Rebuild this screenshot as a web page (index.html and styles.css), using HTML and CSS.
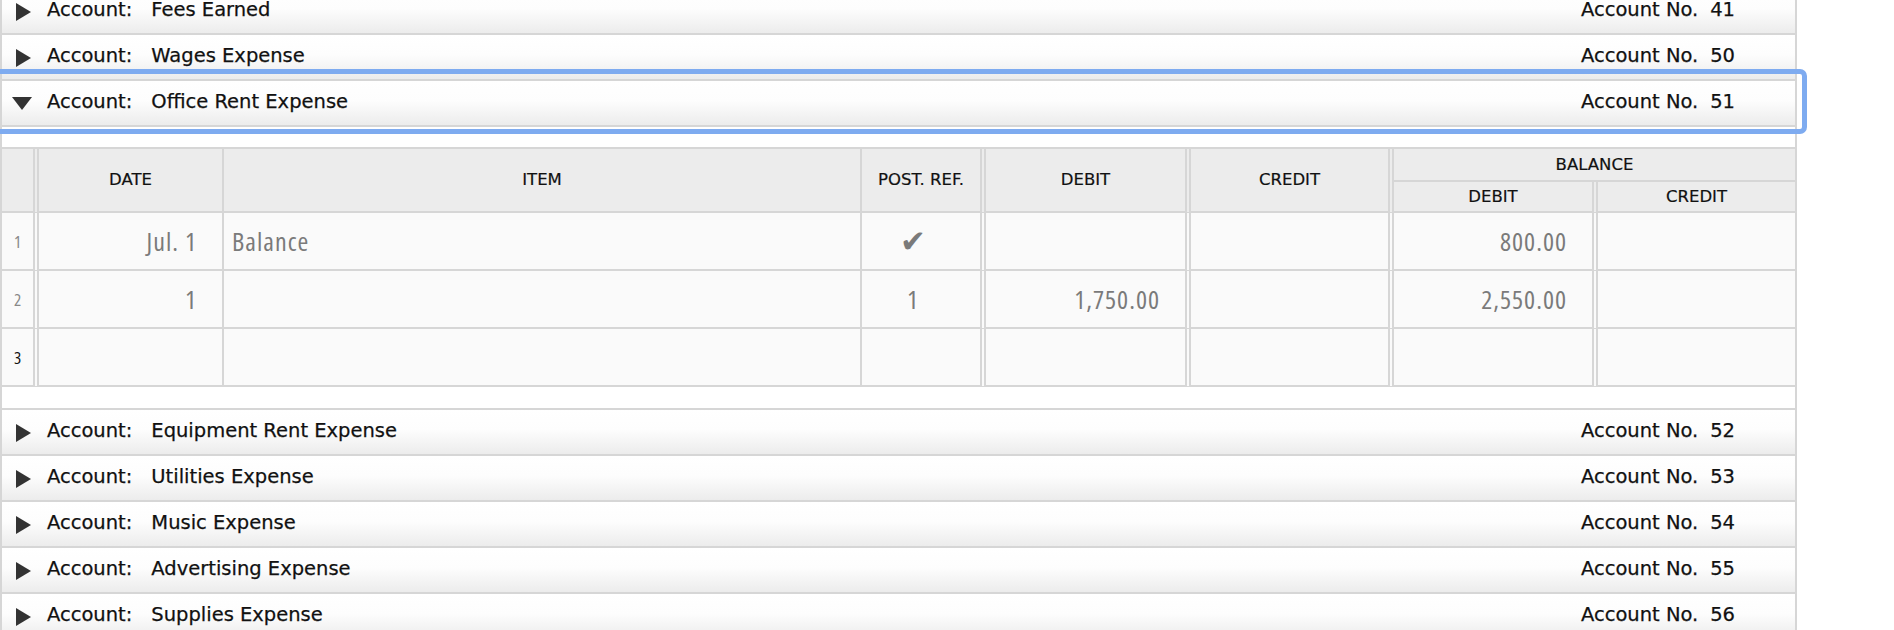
FILE: index.html
```html
<!DOCTYPE html>
<html lang="en">
<head>
<meta charset="utf-8">
<title>General Ledger</title>
<link rel="stylesheet" href="styles.css">
</head>
<body>
<div class="panel">
  <div class="acct-head">
    <span class="tw"><svg class="tri-r" viewBox="0 0 15 18" width="15" height="18"><polygon points="0,0 15,9 0,18"/></svg></span>
    <span class="lbl">Account:</span><span class="name">Fees Earned</span>
    <span class="no">Account No.<span class="num">41</span></span>
  </div>
  <div class="acct-head">
    <span class="tw"><svg class="tri-r" viewBox="0 0 15 18" width="15" height="18"><polygon points="0,0 15,9 0,18"/></svg></span>
    <span class="lbl">Account:</span><span class="name">Wages Expense</span>
    <span class="no">Account No.<span class="num">50</span></span>
  </div>
  <div class="acct-head focused">
    <span class="tw"><svg class="tri-d" viewBox="0 0 20 13" width="20" height="13"><polygon points="0,0 20,0 10,13"/></svg></span>
    <span class="lbl">Account:</span><span class="name">Office Rent Expense</span>
    <span class="no">Account No.<span class="num">51</span></span>
  </div>
  <div class="acct-body">
    <div class="ledger">
      <div class="c h c-rn hs"></div>
      <div class="c h c-date hs">DATE</div>
      <div class="c h c-item hs">ITEM</div>
      <div class="c h c-pr hs">POST. REF.</div>
      <div class="c h c-dr hs">DEBIT</div>
      <div class="c h c-cr hs">CREDIT</div>
      <div class="c h c-bal">BALANCE</div>
      <div class="c h c-bdr">DEBIT</div>
      <div class="c h c-bcr">CREDIT</div>

      <div class="c d c-rn rn">1</div>
      <div class="c d c-date num-r">Jul. 1</div>
      <div class="c d c-item txt">Balance</div>
      <div class="c d c-pr ctr"><span class="check">&#10004;</span></div>
      <div class="c d c-dr num-r"></div>
      <div class="c d c-cr num-r"></div>
      <div class="c d c-bdr num-r">800.00</div>
      <div class="c d c-bcr num-r"></div>

      <div class="c d c-rn rn">2</div>
      <div class="c d c-date num-r">1</div>
      <div class="c d c-item txt"></div>
      <div class="c d c-pr ctr">1</div>
      <div class="c d c-dr num-r">1,750.00</div>
      <div class="c d c-cr num-r"></div>
      <div class="c d c-bdr num-r">2,550.00</div>
      <div class="c d c-bcr num-r"></div>

      <div class="c d c-rn rn rn-new">3</div>
      <div class="c d c-date num-r"></div>
      <div class="c d c-item txt"></div>
      <div class="c d c-pr ctr"></div>
      <div class="c d c-dr num-r"></div>
      <div class="c d c-cr num-r"></div>
      <div class="c d c-bdr num-r"></div>
      <div class="c d c-bcr num-r"></div>
    </div>
  </div>
  <div class="acct-head">
    <span class="tw"><svg class="tri-r" viewBox="0 0 15 18" width="15" height="18"><polygon points="0,0 15,9 0,18"/></svg></span>
    <span class="lbl">Account:</span><span class="name">Equipment Rent Expense</span>
    <span class="no">Account No.<span class="num">52</span></span>
  </div>
  <div class="acct-head">
    <span class="tw"><svg class="tri-r" viewBox="0 0 15 18" width="15" height="18"><polygon points="0,0 15,9 0,18"/></svg></span>
    <span class="lbl">Account:</span><span class="name">Utilities Expense</span>
    <span class="no">Account No.<span class="num">53</span></span>
  </div>
  <div class="acct-head">
    <span class="tw"><svg class="tri-r" viewBox="0 0 15 18" width="15" height="18"><polygon points="0,0 15,9 0,18"/></svg></span>
    <span class="lbl">Account:</span><span class="name">Music Expense</span>
    <span class="no">Account No.<span class="num">54</span></span>
  </div>
  <div class="acct-head">
    <span class="tw"><svg class="tri-r" viewBox="0 0 15 18" width="15" height="18"><polygon points="0,0 15,9 0,18"/></svg></span>
    <span class="lbl">Account:</span><span class="name">Advertising Expense</span>
    <span class="no">Account No.<span class="num">55</span></span>
  </div>
  <div class="acct-head">
    <span class="tw"><svg class="tri-r" viewBox="0 0 15 18" width="15" height="18"><polygon points="0,0 15,9 0,18"/></svg></span>
    <span class="lbl">Account:</span><span class="name">Supplies Expense</span>
    <span class="no">Account No.<span class="num">56</span></span>
  </div>
</div>
</body>
</html>
```
FILE: styles.css
```css
html, body {
  margin: 0;
  padding: 0;
  background: #ffffff;
}

body {
  font-family: "DejaVu Sans", Verdana, sans-serif;
  color: #111111;
  overflow: hidden;
}

.panel {
  width: 1797px;
  box-sizing: border-box;
  border-left: 2px solid #d6d6d6;
  border-right: 2px solid #d6d6d6;
  margin-top: -13px;
}

.acct-head {
  position: relative;
  display: flex;
  align-items: center;
  height: 44px;
  border-top: 2px solid #d6d6d6;
  background: linear-gradient(#ffffff 0%, #fdfdfd 45%, #ececec 100%);
  padding-left: 10px;
  padding-right: 60px;
  font-size: 19.5px;
  line-height: 1;
  -webkit-text-stroke: 0.25px #111111;
}

.acct-head.focused::after {
  content: "";
  position: absolute;
  top: -12px;
  bottom: -9px;
  left: -20px;
  right: -12px;
  border: 5px solid #7eabf0;
  border-radius: 7px;
  pointer-events: none;
}

.tw {
  width: 20px;
  height: 20px;
  display: flex;
  align-items: center;
  justify-content: center;
  margin-top: 1px;
}

.tw svg {
  fill: #333333;
  display: block;
}

.tri-r {
  margin-left: 2px;
}

.lbl {
  margin-left: 15px;
  margin-top: -2px;
}

.name {
  margin-left: 19px;
  margin-top: -2px;
}

.no {
  margin-left: auto;
  margin-top: -2px;
  width: 154px;
  display: flex;
  justify-content: space-between;
  white-space: nowrap;
}

.acct-body {
  border-top: 2px solid #d6d6d6;
  padding: 20px 0 21px;
  background: #ffffff;
}

.ledger {
  display: grid;
  grid-template-columns: 37px 185px 638px 124px 205px 203px 204px 197px;
  grid-template-rows: 33px 31px repeat(3, 58px);
  border-top: 2px solid #d6d6d6;
}

.c {
  box-sizing: border-box;
  border-bottom: 2px solid #d6d6d6;
  display: flex;
  align-items: center;
}

.c-rn, .c-pr, .c-dr, .c-cr, .c-bdr {
  border-right: 6px double #d6d6d6;
}

.c-date, .c-item {
  border-right: 2px solid #d6d6d6;
}

.h {
  background: #ececec;
  justify-content: center;
  font-size: 16.5px;
  color: #111111;
  line-height: 1;
  -webkit-text-stroke: 0.2px #111111;
}

.hs {
  grid-row: span 2;
}

.c-bal {
  grid-column: 7 / span 2;
  border-right: none;
  padding-top: 2px;
}

.h.c-bdr, .h.c-bcr {
  padding-top: 2px;
}

.d {
  background: #fafafa;
  font-family: "Open Sans", "DejaVu Sans Condensed", sans-serif;
  font-stretch: 75%;
  font-size: 26px;
  letter-spacing: 1px;
  color: #7a7a7a;
  line-height: 1;
}

.num-r {
  justify-content: flex-end;
  padding-right: 25px;
}

.txt {
  padding-left: 8px;
}

.ctr {
  justify-content: center;
  padding-right: 16px;
}

.rn {
  justify-content: center;
  font-size: 17px;
  letter-spacing: 0;
  color: #888888;
}

.rn-new {
  color: #111111;
}

.check {
  font-family: "DejaVu Sans", sans-serif;
  font-stretch: normal;
  letter-spacing: 0;
  font-size: 31px;
  color: #7a7a7a;
}
```
